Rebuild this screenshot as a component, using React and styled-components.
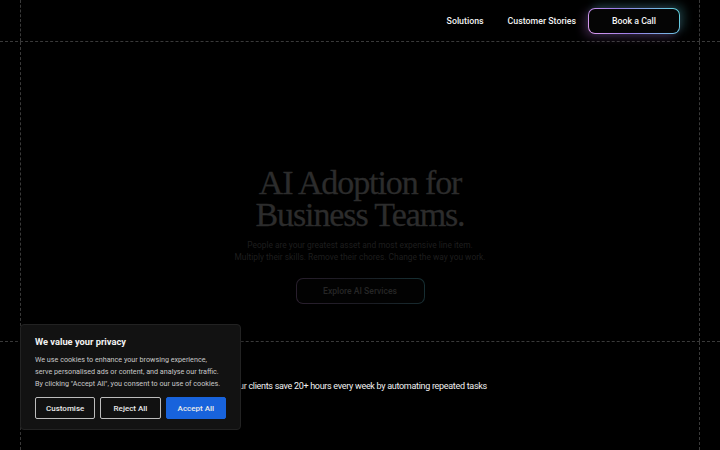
import React from 'react'
import styled, { createGlobalStyle } from 'styled-components'

const GlobalStyle = createGlobalStyle`
  html, body {
    margin: 0;
    padding: 0;
    background: #000;
    font-family: Roboto, "Noto Sans", sans-serif;
    -webkit-font-smoothing: antialiased;
  }
  * { box-sizing: border-box; }
`

function App() {
  return (
    <>
      <GlobalStyle />
      <Page>
        <Header>
          <HeaderInner>
            <NavLink>Solutions</NavLink>
            <NavLink>Customer Stories</NavLink>
            <CallButton>Book a Call</CallButton>
          </HeaderInner>
        </Header>

        <Hero>
          <HeroInner>
            <Heading>
              AI Adoption for
              <br />
              Business Teams.
            </Heading>
            <Lead>
              People are your greatest asset and most expensive line item.
              <br />
              Multiply their skills. Remove their chores. Change the way you work.
            </Lead>
            <ExploreButton>Explore AI Services</ExploreButton>
          </HeroInner>
        </Hero>

        <Stats>
          <StatsInner>
            <StatText>Our clients save 20+ hours every week by automating repeated tasks</StatText>
          </StatsInner>
        </Stats>

        <CookieBanner>
          <CookieTitle>We value your privacy</CookieTitle>
          <CookieText>
            We use cookies to enhance your browsing experience,
            <br />
            serve personalised ads or content, and analyse our traffic.
            <br />
            By clicking "Accept All", you consent to our use of cookies.
          </CookieText>
          <CookieActions>
            <CookieButton>Customise</CookieButton>
            <CookieButton>Reject All</CookieButton>
            <CookieButton primary>Accept All</CookieButton>
          </CookieActions>
        </CookieBanner>
      </Page>
    </>
  )
}

export default App

// Style section

const Page = styled.div`
  position: relative;
  width: 720px;
  height: 450px;
  overflow: hidden;
  background: #000;
`

const Header = styled.header`
  height: 42px;
  border-bottom: 1px dashed #3a3a3a;
`

const Frame = styled.div`
  margin: 0 20px;
  height: 100%;
  border-left: 1px dashed #3a3a3a;
  border-right: 1px dashed #3a3a3a;
`

const HeaderInner = styled(Frame)`
  display: flex;
  align-items: center;
  justify-content: flex-end;
  padding-right: 19px;
  gap: 24px;
`

const NavLink = styled.a`
  color: #f2f2f2;
  font-size: 8.8px;
  font-weight: 500;
  cursor: pointer;
`

const CallButton = styled.button`
  width: 92px;
  height: 26px;
  margin-left: -12px;
  border-radius: 7px;
  border: 1.5px solid transparent;
  background:
    linear-gradient(#050505, #050505) padding-box,
    linear-gradient(60deg, #e09cf0 0%, #9a7ce8 40%, #5fd8e0 100%) border-box;
  box-shadow: -4px 3px 10px rgba(200, 120, 230, 0.25), 4px -3px 10px rgba(90, 210, 220, 0.25);
  color: #f5f5f5;
  font-family: Roboto, sans-serif;
  font-size: 8.8px;
  font-weight: 500;
  cursor: pointer;
`

const Hero = styled.section`
  height: 300px;
  border-bottom: 1px dashed #3a3a3a;
`

const HeroInner = styled(Frame)`
  display: flex;
  flex-direction: column;
  align-items: center;
  padding-top: 125px;
`

const Heading = styled.h1`
  margin: 0;
  font-family: "Liberation Serif", "DejaVu Serif", serif;
  font-weight: 400;
  font-size: 34px;
  line-height: 32px;
  letter-spacing: -1.1px;
  text-align: center;
  color: #2c2c2c;
  -webkit-text-stroke: 0.3px #2c2c2c;
`

const Lead = styled.p`
  margin: 8px 0 0;
  font-size: 8.4px;
  line-height: 12px;
  text-align: center;
  color: #1e1e1e;
`

const ExploreButton = styled.button`
  margin-top: 15px;
  width: 129px;
  height: 26px;
  border-radius: 7px;
  border: 1px solid transparent;
  background:
    linear-gradient(#020202, #020202) padding-box,
    linear-gradient(60deg, #2a1f2e 0%, #1b1b22 50%, #163034 100%) border-box;
  color: #262626;
  font-family: Roboto, sans-serif;
  font-size: 8.6px;
  font-weight: 500;
`

const Stats = styled.section`
  height: 108px;
`

const StatsInner = styled(Frame)`
  display: flex;
  justify-content: center;
  padding-top: 38px;
`

const StatText = styled.p`
  margin: 0;
  color: #f0f0f0;
  font-size: 9px;
  letter-spacing: -0.3px;
  line-height: 13px;
`

const CookieBanner = styled.div`
  position: absolute;
  left: 20px;
  top: 324px;
  width: 221px;
  padding: 10px 14px 10px;
  background: #121212;
  border: 1px solid #222;
  border-radius: 4px;
  box-shadow: 0 2px 8px rgba(0, 0, 0, 0.5);
`

const CookieTitle = styled.div`
  color: #f2f2f2;
  font-size: 9.3px;
  font-weight: 700;
  line-height: 14px;
`

const CookieText = styled.p`
  margin: 5px 0 0;
  color: #c9c9c9;
  font-size: 7.2px;
  line-height: 12px;
  white-space: nowrap;
`

const CookieActions = styled.div`
  display: flex;
  gap: 5px;
  margin-top: 7px;
`

const CookieButton = styled.button`
  flex: 1;
  height: 22px;
  border-radius: 2px;
  border: 1.5px solid ${p => (p.primary ? '#1863dc' : '#bdbdbd')};
  background: ${p => (p.primary ? '#1863dc' : '#111')};
  color: #eaeaea;
  font-family: Roboto, sans-serif;
  font-size: 8px;
  font-weight: 500;
  cursor: pointer;
`
